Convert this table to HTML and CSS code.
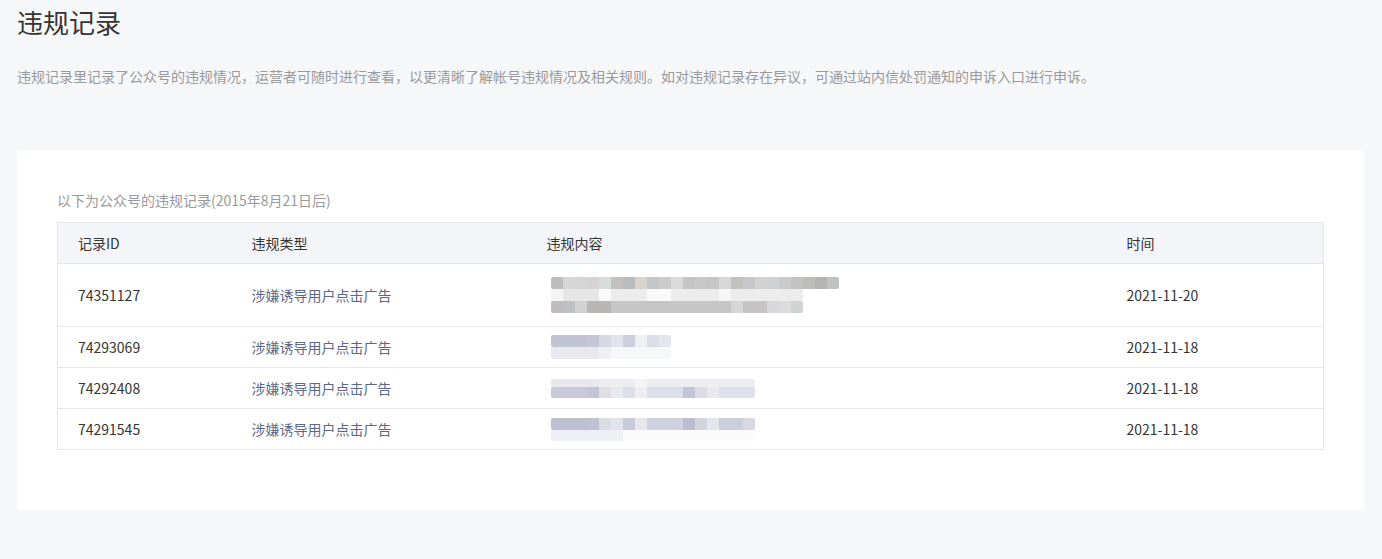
FILE: index.html
```html
<!DOCTYPE html>
<html lang="zh-CN">
<head>
<meta charset="utf-8">
<title>违规记录</title>
<link rel="stylesheet" href="styles.css">
</head>
<body>
<div class="page">
  <h1 class="title">违规记录</h1>
  <p class="desc">违规记录里记录了公众号的违规情况，运营者可随时进行查看，以更清晰了解帐号违规情况及相关规则。如对违规记录存在异议，可通过站内信处罚通知的申诉入口进行申诉。</p>
  <div class="card">
    <div class="caption">以下为公众号的违规记录(2015年8月21日后)</div>
    <table class="records">
      <thead>
        <tr><th class="c1">记录ID</th><th class="c2">违规类型</th><th class="c3">违规内容</th><th class="c4">时间</th></tr>
      </thead>
      <tbody>
        <tr class="tall">
          <td>74351127</td><td class="type">涉嫌诱导用户点击广告</td>
          <td><div class="blur b1a"></div><div class="blur b1b"></div><div class="blur b1c"></div></td>
          <td>2021-11-20</td>
        </tr>
        <tr>
          <td>74293069</td><td class="type">涉嫌诱导用户点击广告</td>
          <td><div class="blur b2a"></div><div class="blur b2b"></div></td>
          <td>2021-11-18</td>
        </tr>
        <tr>
          <td>74292408</td><td class="type">涉嫌诱导用户点击广告</td>
          <td><div class="blur b3a"></div><div class="blur b3b"></div></td>
          <td>2021-11-18</td>
        </tr>
        <tr>
          <td>74291545</td><td class="type">涉嫌诱导用户点击广告</td>
          <td><div class="blur b4a"></div><div class="blur b4b"></div></td>
          <td>2021-11-18</td>
        </tr>
      </tbody>
    </table>
  </div>
</div>
</body>
</html>
```

FILE: styles.css
```css
* { box-sizing: border-box; }
html, body { margin: 0; padding: 0; }
body {
  background: #f6f7f9;
  font-family: "Noto Sans CJK SC", "Microsoft YaHei", sans-serif;
  color: #353535;
}
.page { padding: 0 18px 0 17px; }
.title {
  margin: 4px 0 0;
  font-size: 26px;
  line-height: 36px;
  font-weight: normal;
  color: #353535;
}
.desc {
  margin: 26px 0 0;
  font-size: 14px;
  line-height: 20px;
  color: #9a9a9a;
  white-space: nowrap;
}
.card {
  margin-top: 64px;
  background: #fff;
  border-radius: 4px;
  padding: 40px 40px 61px;
  height: 360px;
}
.caption {
  font-size: 14px;
  line-height: 20px;
  color: #9a9a9a;
}
.records {
  margin-top: 12px;
  width: 100%;
  border-collapse: collapse;
  border: 1px solid #e7e7eb;
  font-size: 14px;
}
.records th, .records td {
  text-align: left;
  padding: 0 0 0 20px;
  height: 41px;
  border-bottom: 1px solid #e7e7eb;
  font-weight: normal;
  color: #353535;
  vertical-align: middle;
}
.records th { background: #f4f5f9; }
.c1 { width: 174px; }
.c2 { width: 295px; }
.c3 { width: 580px; }
.records tr.tall td { height: 63px; }
.records td.type { color: #5b6987; }
.blur { height: 12px; width: 120px; border-radius: 2px; }
.b1a { width: 288px; background: linear-gradient(to right,#bdbdbd 0 12px,#d6d6d6 12px 24px,#d4d6d6 24px 36px,#d8d2d5 36px 48px,#d6dbdb 48px 60px,#c4c0bd 60px 72px,#b9bcbc 72px 84px,#d9d3ce 84px 96px,#c3c7ca 96px 108px,#cccccc 108px 120px,#dadada 120px 132px,#c6c4c6 132px 144px,#c8c8c8 144px 156px,#c6c6c6 156px 168px,#d8d8d8 168px 180px,#c1c1c0 180px 192px,#c6c7ca 192px 204px,#d4d2d0 204px 216px,#cfd2d5 216px 228px,#c8cacc 228px 240px,#c4c3c2 240px 252px,#bdbdbb 252px 264px,#b5b5b0 264px 276px,#bfc3c3 276px 288px); }
.b1b { width: 252px; background: linear-gradient(to right,#f4f4f4 0 12px,#e6e6e6 12px 48px,#fafafa 48px 60px,#ececec 60px 96px,#fafafa 96px 120px,#ececec 120px 168px,#f6f6f6 168px 180px,#ececec 180px 252px); }
.b1c { width: 252px; background: linear-gradient(to right,#c1bcbe 0 12px,#bdc0c1 12px 24px,#d2d2d2 24px 36px,#b9b6b5 36px 60px,#c6c6c6 60px 180px,#d6d6d6 180px 192px,#c6c4c4 192px 216px,#d8d8da 216px 228px,#dcdcdc 228px 240px,#d0d4d4 240px 252px); }
.b2a { width: 120px; background: linear-gradient(to right,#c1c4d4 0 36px,#c4c6d6 36px 48px,#d8d8e0 48px 60px,#e2e4ec 60px 72px,#cdd0dc 72px 84px,#f0f0f2 84px 96px,#dcdde6 96px 108px,#e4e6ee 108px 120px); }
.b2b { width: 120px; background: linear-gradient(to right,#e8e8ee 0 48px,#f0f0f4 48px 60px,#f6f7f9 60px 120px); }
.b3a { width: 204px; height: 8px; background: linear-gradient(to right,#e8e8ee 0 48px,#eeeef2 48px 84px,#f4f4f6 84px 96px,#eceef2 96px 204px); }
.b3b { width: 204px; height: 11px; background: linear-gradient(to right,#c8cad8 0 36px,#c3c5d6 36px 48px,#e1dfe6 48px 60px,#e8eaf0 60px 72px,#dcdee8 72px 84px,#eeeef2 84px 96px,#dcdee8 96px 132px,#c2c6d6 132px 144px,#dcdce6 144px 156px,#e8e8ee 156px 168px,#e0e0ea 168px 204px); }
.b4a { width: 204px; background: linear-gradient(to right,#bcc0d2 0 36px,#c0c2d4 36px 48px,#dcdce4 48px 60px,#e0e4ec 60px 72px,#c8ccda 72px 84px,#e8e8ec 84px 96px,#cfd2de 96px 132px,#b9bdd0 132px 144px,#d4d4de 144px 156px,#e4e6ec 156px 168px,#cbcedc 168px 192px,#d8d8e2 192px 204px); }
.b4b { width: 204px; height: 11px; background: linear-gradient(to right,#eeeff4 0 72px,#fbfbfc 72px 204px); }
.records td .blur { margin-left: 4px; }
```
